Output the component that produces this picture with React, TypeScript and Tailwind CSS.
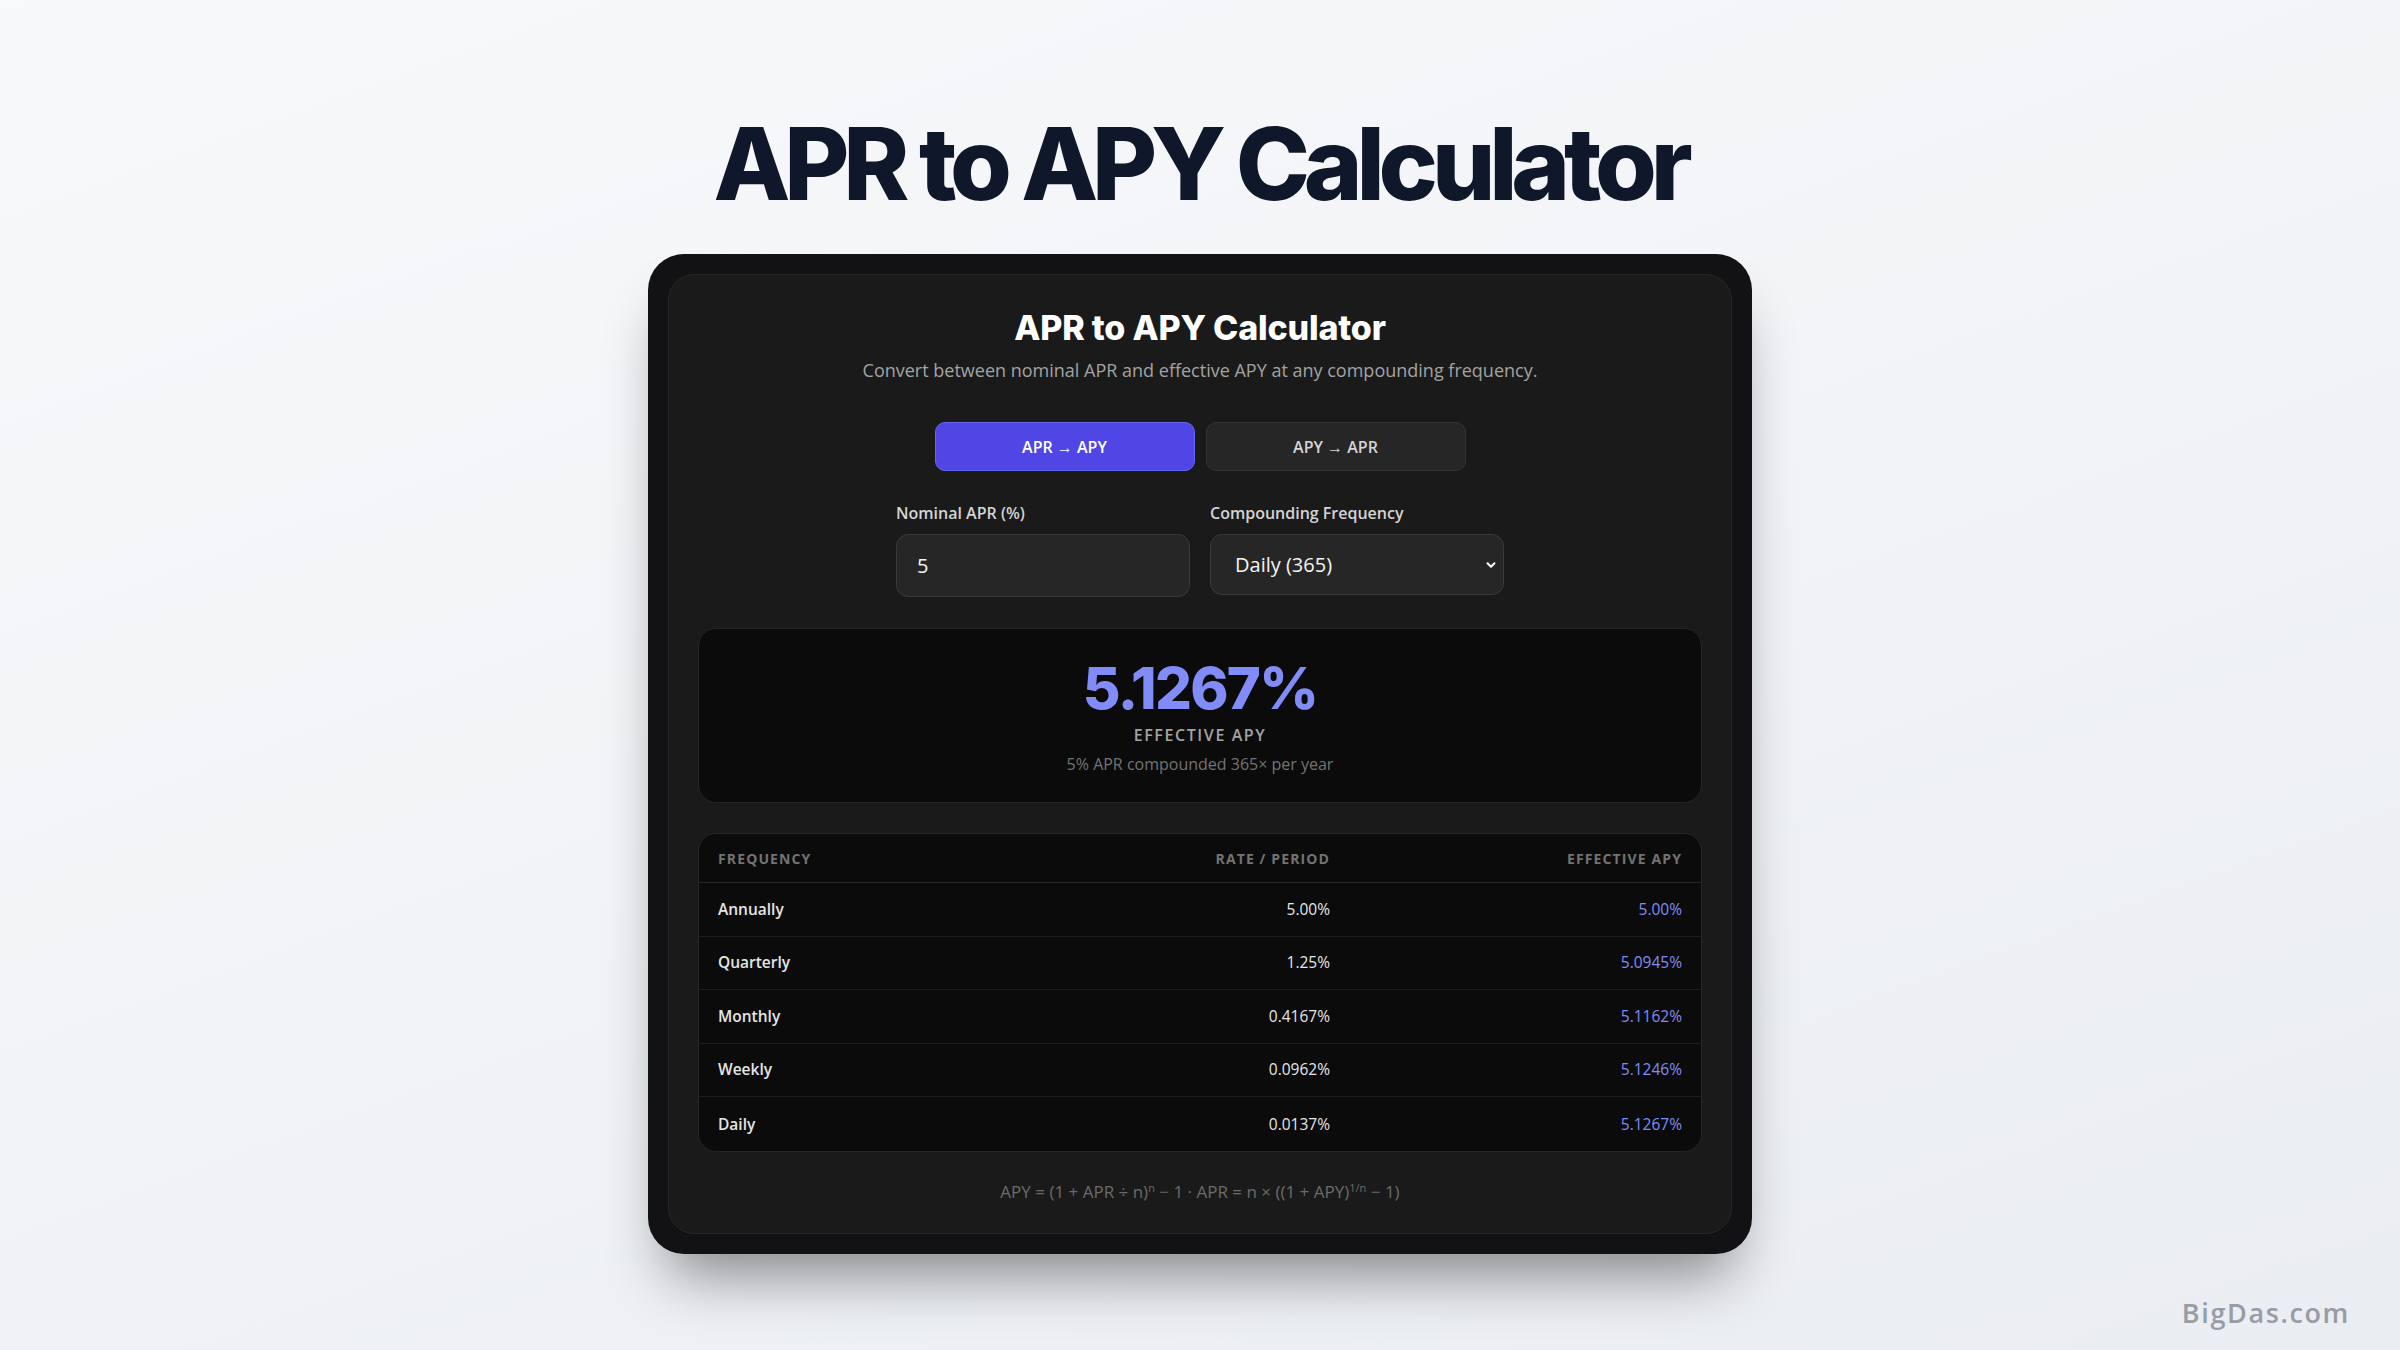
import { ChevronDown } from 'lucide-react';

const rows = [
  { label: 'Annually', rate: '5.00%', apy: '5.00%' },
  { label: 'Quarterly', rate: '1.25%', apy: '5.0945%' },
  { label: 'Monthly', rate: '0.4167%', apy: '5.1162%' },
  { label: 'Weekly', rate: '0.0962%', apy: '5.1246%' },
  { label: 'Daily', rate: '0.0137%', apy: '5.1267%' },
];

const body = "font-['Open_Sans',_'Noto_Sans',_sans-serif]";
const display = "font-['Inter',_'Noto_Sans',_sans-serif]";

export default function App() {
  return (
    <div
      className={`relative flex h-[1350px] w-full flex-col items-center overflow-hidden bg-[linear-gradient(160deg,#f8f9fb_0%,#f1f3f6_50%,#eaedf2_100%)] pt-[114px] ${body}`}
    >
      <h1 className={`text-[100px] leading-none font-extrabold tracking-[-0.062em] text-[#0f172a] ${display}`}>
        APR to APY Calculator
      </h1>

      <div className="mt-[40px] w-[1104px] rounded-[36px] bg-[#121214] p-5 shadow-[0_40px_60px_-20px_rgba(0,0,0,0.45)]">
        <div className="flex flex-col items-center rounded-[26px] border border-[#262626] bg-[#1a1a1a] px-[29px] pt-8 pb-[31px]">
          <h2 className={`text-[34px] leading-[41px] font-extrabold tracking-[-0.005em] text-white ${display}`}>
            APR to APY Calculator
          </h2>
          <p className="mt-[10px] text-[18px] leading-6 text-[#a3a3a3]">
            Convert between nominal APR and effective APY at any compounding frequency.
          </p>

          <div className="mt-10 flex gap-[11px]">
            <button className="h-[49px] w-[260px] rounded-[10px] border border-[#6366f1] bg-[#4f46e5] text-[16px] font-semibold text-white">
              APR → APY
            </button>
            <button className="h-[49px] w-[260px] rounded-[10px] border border-[#333333] bg-[#262626] text-[16px] font-semibold text-[#d4d4d4]">
              APY → APR
            </button>
          </div>

          <div className="mt-8 grid grid-cols-[294px_294px] gap-5">
            <label className="flex flex-col">
              <span className="text-[16px] leading-5 font-semibold text-[#d4d4d4]">Nominal APR (%)</span>
              <input
                defaultValue="5"
                className="mt-[11px] h-[63px] rounded-[12px] border border-[#3a3a3a] bg-[#262626] px-5 text-[20px] text-[#f5f5f5] outline-none"
              />
            </label>
            <label className="flex flex-col">
              <span className="text-[16px] leading-5 font-semibold text-[#d4d4d4]">Compounding Frequency</span>
              <div className="relative mt-[11px]">
                <select
                  defaultValue="365"
                  className="h-[61px] w-full appearance-none rounded-[12px] border border-[#3a3a3a] bg-[#262626] px-6 text-[20px] text-[#f5f5f5] outline-none"
                >
                  <option value="1">Annually (1)</option>
                  <option value="4">Quarterly (4)</option>
                  <option value="12">Monthly (12)</option>
                  <option value="52">Weekly (52)</option>
                  <option value="365">Daily (365)</option>
                </select>
                <ChevronDown
                  className="pointer-events-none absolute top-1/2 right-[6px] size-[14px] -translate-y-1/2 text-white"
                  strokeWidth={3.5}
                />
              </div>
            </label>
          </div>

          <div className="mt-[31px] flex w-full flex-col items-center rounded-[18px] border border-[#262626] bg-[#0b0b0b] pt-[30px] pb-[28px]">
            <div className={`text-[58px] leading-none font-extrabold tracking-[-0.03em] text-[#818cf8] ${display}`}>
              5.1267%
            </div>
            <div className="mt-2 text-[16px] leading-5 font-semibold tracking-[0.1em] text-[#a3a3a3]">EFFECTIVE APY</div>
            <div className="mt-[9px] text-[16px] leading-5 text-[#737373]">5% APR compounded 365× per year</div>
          </div>

          <div className="mt-[30px] w-full overflow-hidden rounded-[18px] border border-[#262626] bg-[#0b0b0b]">
            <div className="grid h-[49px] grid-cols-[1fr_272px_352px] items-center border-b border-[#262626] px-[19px] text-[14px] font-bold tracking-[0.08em] text-[#737373]">
              <span>FREQUENCY</span>
              <span className="text-right">RATE / PERIOD</span>
              <span className="text-right">EFFECTIVE APY</span>
            </div>
            {rows.map((row, i) => (
              <div
                key={row.label}
                className={`grid h-[53.6px] grid-cols-[1fr_272px_352px] items-center px-[19px] text-[15.5px] ${
                  i < rows.length - 1 ? 'border-b border-[#1f1f1f]' : ''
                }`}
              >
                <span className="font-semibold text-[#e5e5e5]">{row.label}</span>
                <span className="text-right text-[#e5e5e5]">{row.rate}</span>
                <span className="text-right text-[#818cf8]">{row.apy}</span>
              </div>
            ))}
          </div>

          <p className="mt-[30px] text-[17px] leading-5 text-[#6b6b6b]">
            APY = (1 + APR ÷ n)<sup className="text-[11px]">n</sup> − 1 · APR = n × ((1 + APY)
            <sup className="text-[11px]">1/n</sup> − 1)
          </p>
        </div>
      </div>

      <div className="absolute right-[50px] bottom-[17px] text-[27px] font-semibold tracking-[0.06em] text-[#979ca6]">
        BigDas.com
      </div>
    </div>
  );
}
